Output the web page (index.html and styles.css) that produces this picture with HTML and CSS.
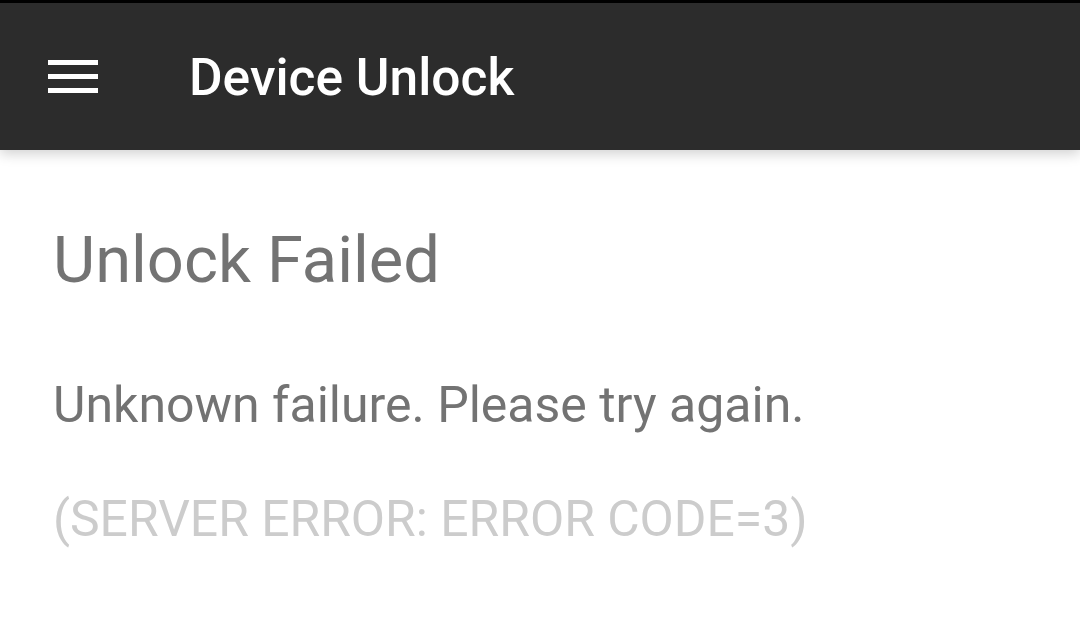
FILE: index.html
```html
<!DOCTYPE html>
<html>
<head>
<meta charset="utf-8">
<link rel="stylesheet" href="styles.css">
</head>
<body>
<div class="statusline"></div>
<header class="appbar">
  <svg class="menu" width="50" height="34" viewBox="0 0 50 34">
    <rect x="0" y="0" width="50" height="5" fill="#fff"/>
    <rect x="0" y="14" width="50" height="5" fill="#fff"/>
    <rect x="0" y="28" width="50" height="5" fill="#fff"/>
  </svg>
  <h1 class="title">Device Unlock</h1>
</header>
<main class="content">
  <h2 class="heading">Unlock Failed</h2>
  <p class="message">Unknown failure. Please try again.</p>
  <p class="code">(SERVER ERROR: ERROR CODE=3)</p>
</main>
</body>
</html>
```
FILE: styles.css
```css
html, body {
  margin: 0;
  padding: 0;
  background: #ffffff;
  font-family: Roboto, "Liberation Sans", sans-serif;
  width: 1080px;
  height: 621px;
  overflow: hidden;
}
.statusline {
  height: 3px;
  background: #000;
}
.appbar {
  position: relative;
  z-index: 1;
  height: 147px;
  background: #2c2c2c;
  display: flex;
  align-items: center;
  box-shadow: 0 4px 12px rgba(0,0,0,0.18);
}
.menu {
  margin-left: 48px;
  flex: none;
}
.title {
  margin: 0 0 0 91px;
  padding-top: 3px;
  color: #ffffff;
  font-weight: 500;
  font-size: 51.5px;
  line-height: 1;
}
.content {
  padding: 0 0 0 53px;
}
.heading {
  margin: 0;
  padding-top: 78px;
  font-weight: 400;
  font-size: 65px;
  line-height: 1;
  color: #737373;
}
.message {
  margin: 0;
  padding-top: 87px;
  font-size: 50px;
  line-height: 1;
  color: #737373;
}
.code {
  margin: 0;
  padding-top: 65px;
  font-size: 49.8px;
  line-height: 1;
  color: #cccccc;
}
```
